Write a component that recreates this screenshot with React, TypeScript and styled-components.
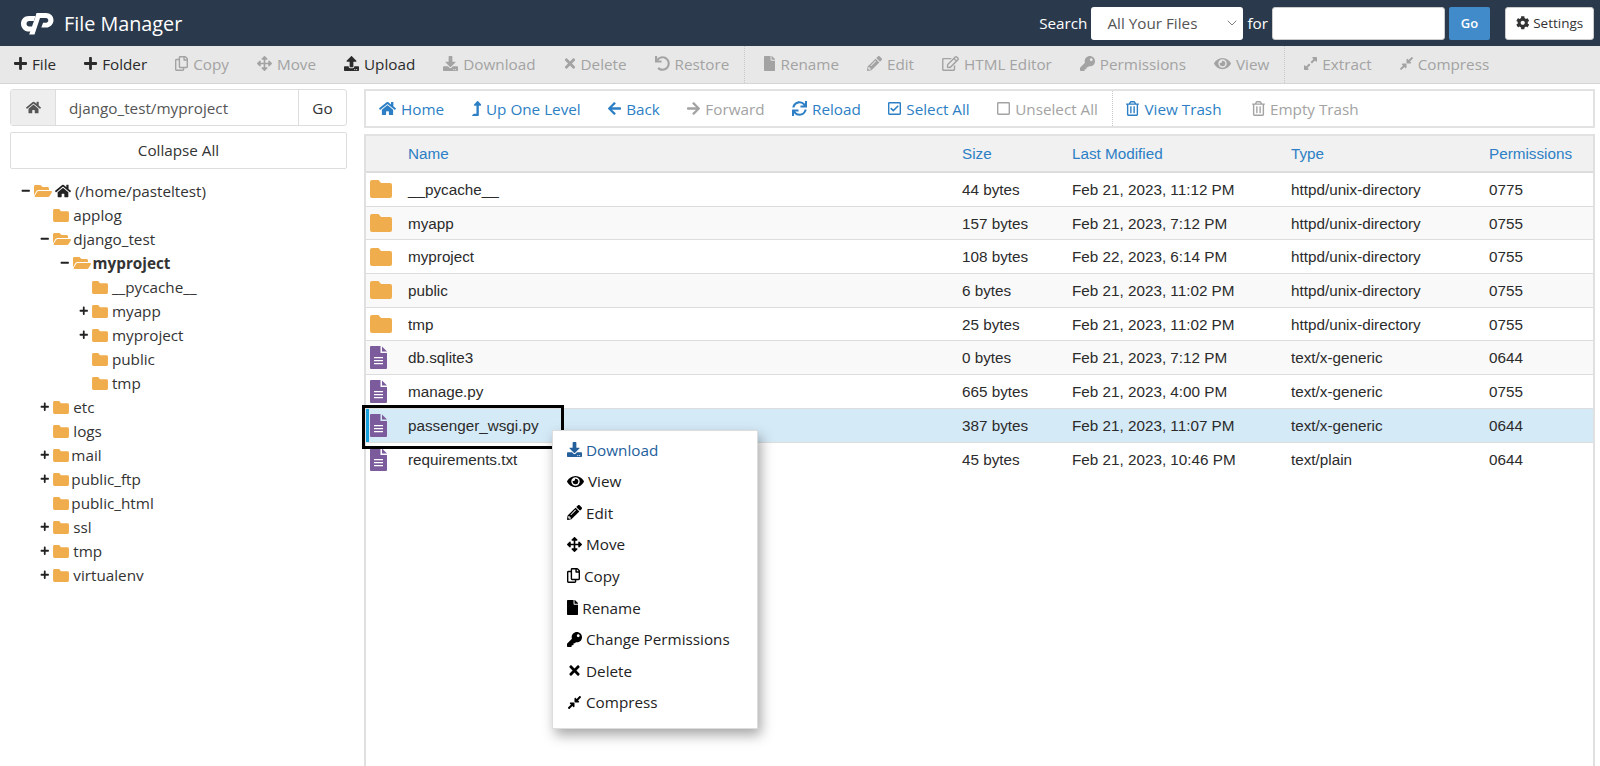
import React from 'react';
import styled, { createGlobalStyle } from 'styled-components';
import { ChevronDown } from 'lucide-react';
import {
  FaPlus, FaRegCopy, FaArrowsAlt, FaUpload, FaDownload, FaTimes, FaUndo, FaFile, FaPencilAlt,
  FaRegEdit, FaKey, FaEye, FaExpandAlt, FaCompressAlt, FaHome, FaLevelUpAlt, FaArrowLeft,
  FaArrowRight, FaSync, FaRegCheckSquare, FaRegSquare, FaRegTrashAlt, FaCog, FaFolderOpen, FaMinus,
} from 'react-icons/fa';

const GlobalStyle = createGlobalStyle`
  html, body { margin: 0; padding: 0; height: 100%; background: #fff; overflow: hidden; }
  body { font-family: "Open Sans", "Liberation Sans", sans-serif; color: #333; }
  * { box-sizing: border-box; }
`;

const Page = styled.div`
  position: relative;
  width: 1600px;
  height: 766px;
  display: flex;
  flex-direction: column;
  overflow: hidden;
`;

const Header = styled.header`
  height: 46px;
  flex: none;
  display: flex;
  align-items: center;
  padding: 0 6px 0 20px;
  background: #2a3a4c;
  color: #fff;
`;

const Logo = styled.svg`
  width: 34px;
  height: 23px;
  margin-right: 10px;
  fill: #fff;
`;

const Title = styled.h1`
  margin: 0;
  font-size: 19.8px;
  font-weight: 400;
  flex: 1;
`;

const SearchLabel = styled.span`
  font-size: 15.25px;
  margin-right: 4px;
`;

const SelectBox = styled.div`
  width: 152px;
  height: 33px;
  display: flex;
  align-items: center;
  justify-content: space-between;
  padding: 0 3px 0 16px;
  background: #fff;
  border-radius: 3px;
  color: #555;
  font-size: 15.25px;
  margin-right: 4px;
  svg { color: #666; }
`;

const SearchInput = styled.input`
  width: 173px;
  height: 33px;
  border: 1px solid #ccc;
  border-radius: 3px;
  background: #fff;
  margin: 0 4px 0 0;
`;

const GoButton = styled.button`
  width: 41px;
  height: 33px;
  border: 0;
  border-radius: 2px;
  background: #428bca;
  color: #fff;
  font: 600 13px "Open Sans", sans-serif;
  margin-right: 15px;
`;

const SettingsButton = styled.button`
  width: 89px;
  height: 33px;
  border: 1px solid #ccc;
  border-radius: 3px;
  background: #fff;
  color: #333;
  font: 400 13.5px "Open Sans", sans-serif;
  display: flex;
  align-items: center;
  justify-content: center;
  gap: 4px;
  padding: 0;
`;

const Toolbar = styled.nav`
  height: 38px;
  flex: none;
  display: flex;
  align-items: center;
  padding: 0 0 0 1px;
  background: #e8e8e8;
  border-bottom: 1px solid #d5d5d5;
`;

const ActionGroup = styled.div<{ $divided?: boolean }>`
  height: 100%;
  display: flex;
  align-items: center;
  padding: 0 0 2px ${p => (p.$divided ? '6px' : '0')};
  border-left: ${p => (p.$divided ? '1px dotted #c8c8c8' : '0')};
`;

const NavGroup = styled.div<{ $divided?: boolean }>`
  height: 100%;
  display: flex;
  align-items: center;
  gap: ${p => (p.$divided ? '3px' : '0')};
  border-left: ${p => (p.$divided ? '1px dotted #c8c8c8' : '0')};
`;

const toneColor = { dark: '#2b2b2b', muted: '#a3a3a3', blue: '#2c7fc5' };

const ActionButton = styled.span<{ $tone: keyof typeof toneColor; $iconWidth: number }>`
  display: inline-flex;
  align-items: center;
  gap: 5px;
  padding: 0 15px 0 13px;
  font-size: 15.25px;
  line-height: 20px;
  white-space: nowrap;
  color: ${p => toneColor[p.$tone]};
  svg { width: ${p => p.$iconWidth}px; height: 15px; flex: none; }
`;

const NavButton = styled(ActionButton)`
  padding-right: 14.5px;
`;

const Main = styled.main`
  flex: 1;
  min-height: 0;
  display: flex;
`;

const Sidebar = styled.aside`
  width: 364px;
  flex: none;
  padding: 5px 17px 0 10px;
`;

const PathBar = styled.div`
  height: 37px;
  display: flex;
  border: 1px solid #ddd;
  border-radius: 3px;
  font-size: 15.25px;
  align-items: stretch;
`;

const PathHome = styled.span`
  width: 45px;
  display: flex;
  align-items: center;
  justify-content: center;
  background: #eee;
  border-right: 1px solid #ddd;
  color: #555;
  font-size: 15px;
`;

const PathInput = styled.span`
  flex: 1;
  display: flex;
  align-items: center;
  padding-left: 13px;
  color: #555;
`;

const PathGo = styled.span`
  width: 48px;
  display: flex;
  align-items: center;
  justify-content: center;
  border-left: 1px solid #ddd;
  color: #333;
`;

const CollapseButton = styled.div`
  height: 37px;
  margin-top: 6px;
  padding-bottom: 1px;
  display: flex;
  align-items: center;
  justify-content: center;
  border: 1px solid #ddd;
  border-radius: 2px;
  font-size: 15.25px;
  color: #333;
`;

const Tree = styled.ul`
  list-style: none;
  margin: 10px 0 0;
  padding: 0;
`;

const TreeRow = styled.li<{ $level: number }>`
  height: 24px;
  display: flex;
  align-items: center;
  padding-left: ${p => 11 + p.$level * 19.3}px;
  font-size: 15.25px;
  color: #333;
  white-space: nowrap;
`;

const Toggle = styled.span`
  width: 13px;
  flex: none;
  display: flex;
  font-size: 9.5px;
  color: #222;
`;

const TreeFolderOpen = styled(FaFolderOpen)`
  width: 18px;
  height: 16px;
  color: #f0ad4e;
  flex: none;
`;

const TreeFolderWrap = styled.span`
  width: 17px;
  flex: none;
  display: flex;
`;

const TreeLabel = styled.span<{ $gap: number; $bold?: boolean }>`
  margin-left: ${p => p.$gap}px;
  font-weight: ${p => (p.$bold ? 700 : 400)};
`;

const TreeHome = styled(FaHome)`
  font-size: 16px;
  margin-left: 3px;
  margin-right: -1px;
  color: #222;
`;

const Content = styled.section`
  flex: 1;
  min-width: 0;
  padding: 5px 5px 0 0;
  display: flex;
  flex-direction: column;
`;

const NavBar = styled.div`
  height: 39px;
  flex: none;
  display: flex;
  align-items: center;
  border: 2px solid #e2e2e2;
  margin-bottom: 6px;
`;

const FileTable = styled.div`
  flex: 1;
  border-left: 2px solid #e0e0e0;
  border-right: 2px solid #e0e0e0;
  border-top: 2px solid #e2e2e2;
  font-family: "Liberation Sans", Arial, sans-serif;
  font-size: 15.25px;
`;

const columns = '42px 554px 110px 219px 198px 1fr';

const HeadRow = styled.div`
  height: 37px;
  display: grid;
  grid-template-columns: ${columns};
  align-items: center;
  background: #f1f1f1;
  border-bottom: 2px solid #ddd;
  color: #2c7fc5;
`;

const FileRow = styled.div<{ $striped: boolean; $selected: boolean }>`
  height: 33.7px;
  display: grid;
  grid-template-columns: ${columns};
  align-items: center;
  color: #2b2b2b;
  background: ${p => (p.$selected ? '#d5eaf7' : p.$striped ? '#f9f9f9' : '#fff')};
  border-bottom: 1px solid #ddd;
  box-shadow: ${p => (p.$selected ? 'inset 3px 0 0 #17a0dc' : 'none')};
`;

const LastFileRow = styled(FileRow)`
  border-bottom: 0;
`;

const IconCell = styled.span`
  display: flex;
  padding-left: 4px;
`;

const FolderIcon = ({ className }: { className?: string }) => (
  <svg className={className} viewBox="0 0 22 18" fill="#f0ad4e">
    <path d="M2 0H8.5L11 3H20a2 2 0 0 1 2 2V16a2 2 0 0 1-2 2H2a2 2 0 0 1-2-2V2a2 2 0 0 1 2-2z" />
  </svg>
);

const TableFolder = styled(FolderIcon)`
  width: 22px;
  height: 18px;
`;

const SmallFolder = styled(FolderIcon)`
  width: 16px;
  height: 13px;
`;

const DocIcon = styled.svg`
  width: 17px;
  height: 23px;
`;

const FileGlyph = () => (
  <DocIcon viewBox="0 0 17 23">
    <path fill="#7b5b9c" d="M1 0H10.5V7H17V22a1 1 0 0 1-1 1H1a1 1 0 0 1-1-1V1a1 1 0 0 1 1-1z" />
    <path fill="#7b5b9c" d="M12 0.5L17 5.5H12z" />
    <path fill="#fff" d="M4 11h9v1.3H4zM4 14h9v1.3H4zM4 17h9v1.3H4z" />
  </DocIcon>
);

const Callout = styled.div`
  position: absolute;
  left: 362px;
  top: 405px;
  width: 202px;
  height: 44px;
  border: 3px solid #000;
  pointer-events: none;
`;

const ContextMenu = styled.ul`
  position: absolute;
  left: 552px;
  top: 430px;
  width: 206px;
  height: 299px;
  margin: 0;
  padding: 3px 0 0 14px;
  list-style: none;
  background: #fff;
  border: 1px solid #ddd;
  box-shadow: 3px 6px 12px rgba(0, 0, 0, 0.35);
`;

const MenuItem = styled.li<{ $active?: boolean; $iconWidth: number }>`
  height: 31.55px;
  display: flex;
  align-items: center;
  gap: 4px;
  font-size: 15.25px;
  color: ${p => (p.$active ? '#23609c' : '#222')};
  svg { width: ${p => p.$iconWidth}px; height: 15px; flex: none; color: ${p => (p.$active ? '#23609c' : '#000')}; }
`;

const LogoMark = () => (
  <Logo viewBox="0 0 34 23">
    <path d="M15.5 4H9C4 4 1 7.5 1 11.7 1 16 4.200 19.500 9 19.500h2.500l2-5H9.200c-1.600 0-2.700-1.200-2.700-2.700S7.600 9 9.200 9h4.600z" />
    <path d="M16.500 1H26c4.300 0 7.500 3.100 7.500 7.200S30 15.500 26 15.500h-4.700l1.800-4.800H26c1.400 0 2.300-1.100 2.300-2.400S27.400 6 26 6h-6L14.500 22.500H9.200L15 6z" />
  </Logo>
);

const topActions = [
  [
    { icon: FaPlus, w: 13, label: 'File', tone: 'dark' },
    { icon: FaPlus, w: 13, label: 'Folder', tone: 'dark' },
    { icon: FaRegCopy, w: 13, label: 'Copy', tone: 'muted' },
    { icon: FaArrowsAlt, w: 15, label: 'Move', tone: 'muted' },
    { icon: FaUpload, w: 15, label: 'Upload', tone: 'dark' },
    { icon: FaDownload, w: 15, label: 'Download', tone: 'muted' },
    { icon: FaTimes, w: 12, label: 'Delete', tone: 'muted' },
    { icon: FaUndo, w: 15, label: 'Restore', tone: 'muted' },
  ],
  [
    { icon: FaFile, w: 11.25, label: 'Rename', tone: 'muted' },
    { icon: FaPencilAlt, w: 15, label: 'Edit', tone: 'muted' },
    { icon: FaRegEdit, w: 17, label: 'HTML Editor', tone: 'muted' },
    { icon: FaKey, w: 15, label: 'Permissions', tone: 'muted' },
    { icon: FaEye, w: 17, label: 'View', tone: 'muted' },
  ],
  [
    { icon: FaExpandAlt, w: 13, label: 'Extract', tone: 'muted' },
    { icon: FaCompressAlt, w: 13, label: 'Compress', tone: 'muted' },
  ],
] as const;

const navActions = [
  [
    { icon: FaHome, w: 17, label: 'Home', tone: 'blue' },
    { icon: FaLevelUpAlt, w: 9.4, label: 'Up One Level', tone: 'blue' },
    { icon: FaArrowLeft, w: 13, label: 'Back', tone: 'blue' },
    { icon: FaArrowRight, w: 13, label: 'Forward', tone: 'muted' },
    { icon: FaSync, w: 15, label: 'Reload', tone: 'blue' },
    { icon: FaRegCheckSquare, w: 13, label: 'Select All', tone: 'blue' },
    { icon: FaRegSquare, w: 13, label: 'Unselect All', tone: 'muted' },
  ],
  [
    { icon: FaRegTrashAlt, w: 13, label: 'View Trash', tone: 'blue' },
    { icon: FaRegTrashAlt, w: 13, label: 'Empty Trash', tone: 'muted' },
  ],
] as const;

type TreeNode = { label: string; level: number; toggle?: 'plus' | 'minus'; open?: boolean; home?: boolean; bold?: boolean; tight?: boolean };

const tree: TreeNode[] = [
  { label: '(/home/pasteltest)', level: 0, toggle: 'minus', open: true, home: true },
  { label: 'applog', level: 1 },
  { label: 'django_test', level: 1, toggle: 'minus', open: true },
  { label: 'myproject', level: 2, toggle: 'minus', open: true, bold: true },
  { label: '__pycache__', level: 3 },
  { label: 'myapp', level: 3, toggle: 'plus' },
  { label: 'myproject', level: 3, toggle: 'plus' },
  { label: 'public', level: 3 },
  { label: 'tmp', level: 3 },
  { label: 'etc', level: 1, toggle: 'plus' },
  { label: 'logs', level: 1 },
  { label: 'mail', level: 1, toggle: 'plus', tight: true },
  { label: 'public_ftp', level: 1, toggle: 'plus', tight: true },
  { label: 'public_html', level: 1, tight: true },
  { label: 'ssl', level: 1, toggle: 'plus' },
  { label: 'tmp', level: 1, toggle: 'plus' },
  { label: 'virtualenv', level: 1, toggle: 'plus' },
];

const files = [
  { kind: 'dir', name: '__pycache__', size: '44 bytes', date: 'Feb 21, 2023, 11:12 PM', type: 'httpd/unix-directory', perm: '0775' },
  { kind: 'dir', name: 'myapp', size: '157 bytes', date: 'Feb 21, 2023, 7:12 PM', type: 'httpd/unix-directory', perm: '0755' },
  { kind: 'dir', name: 'myproject', size: '108 bytes', date: 'Feb 22, 2023, 6:14 PM', type: 'httpd/unix-directory', perm: '0755' },
  { kind: 'dir', name: 'public', size: '6 bytes', date: 'Feb 21, 2023, 11:02 PM', type: 'httpd/unix-directory', perm: '0755' },
  { kind: 'dir', name: 'tmp', size: '25 bytes', date: 'Feb 21, 2023, 11:02 PM', type: 'httpd/unix-directory', perm: '0755' },
  { kind: 'file', name: 'db.sqlite3', size: '0 bytes', date: 'Feb 21, 2023, 7:12 PM', type: 'text/x-generic', perm: '0644' },
  { kind: 'file', name: 'manage.py', size: '665 bytes', date: 'Feb 21, 2023, 4:00 PM', type: 'text/x-generic', perm: '0755' },
  { kind: 'file', name: 'passenger_wsgi.py', size: '387 bytes', date: 'Feb 21, 2023, 11:07 PM', type: 'text/x-generic', perm: '0644', selected: true },
  { kind: 'file', name: 'requirements.txt', size: '45 bytes', date: 'Feb 21, 2023, 10:46 PM', type: 'text/plain', perm: '0644' },
];

const menu = [
  { icon: FaDownload, w: 15, label: 'Download', active: true },
  { icon: FaEye, w: 17, label: 'View' },
  { icon: FaPencilAlt, w: 15, label: 'Edit' },
  { icon: FaArrowsAlt, w: 15, label: 'Move' },
  { icon: FaRegCopy, w: 13, label: 'Copy' },
  { icon: FaFile, w: 11.25, label: 'Rename' },
  { icon: FaKey, w: 15, label: 'Change Permissions' },
  { icon: FaTimes, w: 15, label: 'Delete' },
  { icon: FaCompressAlt, w: 15, label: 'Compress' },
];

const labelGap = (n: TreeNode) => (n.home ? 5 : n.tight ? 1 : n.open ? 2 : 3);

export default function App() {
  return (
    <Page>
      <GlobalStyle />
      <Header>
        <LogoMark />
        <Title>File Manager</Title>
        <SearchLabel>Search</SearchLabel>
        <SelectBox>All Your Files<ChevronDown size={16} strokeWidth={1.25} /></SelectBox>
        <SearchLabel>for</SearchLabel>
        <SearchInput />
        <GoButton>Go</GoButton>
        <SettingsButton><FaCog />Settings</SettingsButton>
      </Header>
      <Toolbar>
        {topActions.map((group, i) => (
          <ActionGroup key={i} $divided={i > 0}>
            {group.map(({ icon: Icon, w, label, tone }) => (
              <ActionButton key={label} $tone={tone} $iconWidth={w}><Icon />{label}</ActionButton>
            ))}
          </ActionGroup>
        ))}
      </Toolbar>
      <Main>
        <Sidebar>
          <PathBar>
            <PathHome><FaHome /></PathHome>
            <PathInput>django_test/myproject</PathInput>
            <PathGo>Go</PathGo>
          </PathBar>
          <CollapseButton>Collapse All</CollapseButton>
          <Tree>
            {tree.map((n, i) => (
              <TreeRow key={i} $level={n.level}>
                <Toggle>{n.toggle === 'minus' ? <FaMinus /> : n.toggle === 'plus' ? <FaPlus /> : null}</Toggle>
                {n.open ? <TreeFolderOpen /> : <TreeFolderWrap><SmallFolder /></TreeFolderWrap>}
                {n.home && <TreeHome />}
                <TreeLabel $gap={labelGap(n)} $bold={n.bold}>{n.label}</TreeLabel>
              </TreeRow>
            ))}
          </Tree>
        </Sidebar>
        <Content>
          <NavBar>
            {navActions.map((group, i) => (
              <NavGroup key={i} $divided={i > 0}>
                {group.map(({ icon: Icon, w, label, tone }) => (
                  <NavButton key={label} $tone={tone} $iconWidth={w}><Icon />{label}</NavButton>
                ))}
              </NavGroup>
            ))}
          </NavBar>
          <FileTable>
            <HeadRow>
              <span /><span>Name</span><span>Size</span><span>Last Modified</span><span>Type</span><span>Permissions</span>
            </HeadRow>
            {files.map((f, i) => {
              const Row = i === files.length - 1 ? LastFileRow : FileRow;
              return (
                <Row key={f.name} $striped={i % 2 === 1} $selected={!!f.selected}>
                  <IconCell>{f.kind === 'dir' ? <TableFolder /> : <FileGlyph />}</IconCell>
                  <span>{f.name}</span><span>{f.size}</span><span>{f.date}</span><span>{f.type}</span><span>{f.perm}</span>
                </Row>
              );
            })}
          </FileTable>
        </Content>
      </Main>
      <Callout />
      <ContextMenu>
        {menu.map(({ icon: Icon, w, label, active }) => (
          <MenuItem key={label} $active={active} $iconWidth={w}><Icon />{label}</MenuItem>
        ))}
      </ContextMenu>
    </Page>
  );
}
